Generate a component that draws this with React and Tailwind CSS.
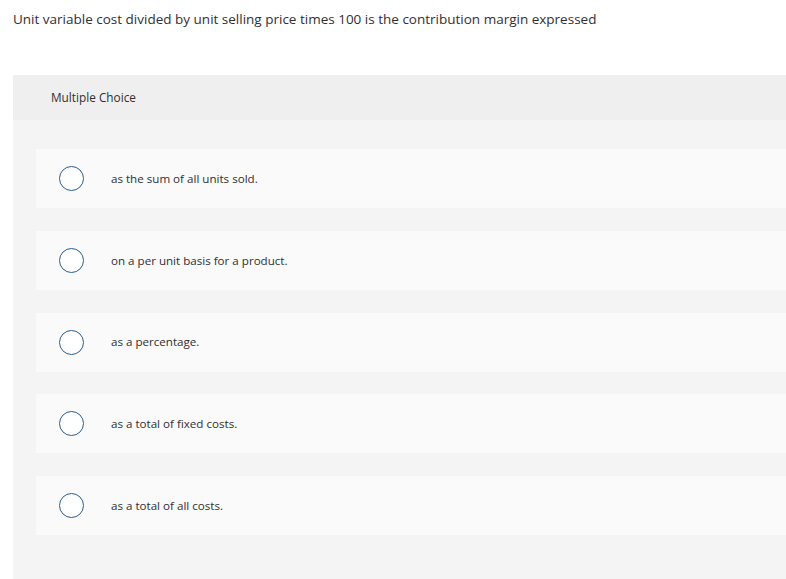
const options = [
  'as the sum of all units sold.',
  'on a per unit basis for a product.',
  'as a percentage.',
  'as a total of fixed costs.',
  'as a total of all costs.',
];

export default function App() {
  return (
    <div className="w-[786px] h-[579px] overflow-hidden bg-white text-[#2f2f35] font-['Open_Sans',sans-serif]">
      <p className="pl-[13px] pt-[10px] text-[13.5px] leading-[18px]">
        Unit variable cost divided by unit selling price times 100 is the contribution margin expressed
      </p>

      <div className="ml-[13px] mt-[47px] bg-[#f4f4f4] h-[600px]">
        <div className="h-[45px] bg-[#efefef] flex items-center pl-[38px] text-[11.8px]">
          Multiple Choice
        </div>
        <div className="pl-[23px] pt-[29px] flex flex-col gap-[22.75px]">
          {options.map((opt) => (
            <div key={opt} className="h-[59px] bg-[#fafafa] flex items-center">
              <span className="ml-[23px] w-[25px] h-[25px] rounded-full border-[1.5px] border-[#2c5d8f] bg-white shrink-0" />
              <span className="ml-[27px] text-[11.6px]">{opt}</span>
            </div>
          ))}
        </div>
      </div>
    </div>
  );
}
